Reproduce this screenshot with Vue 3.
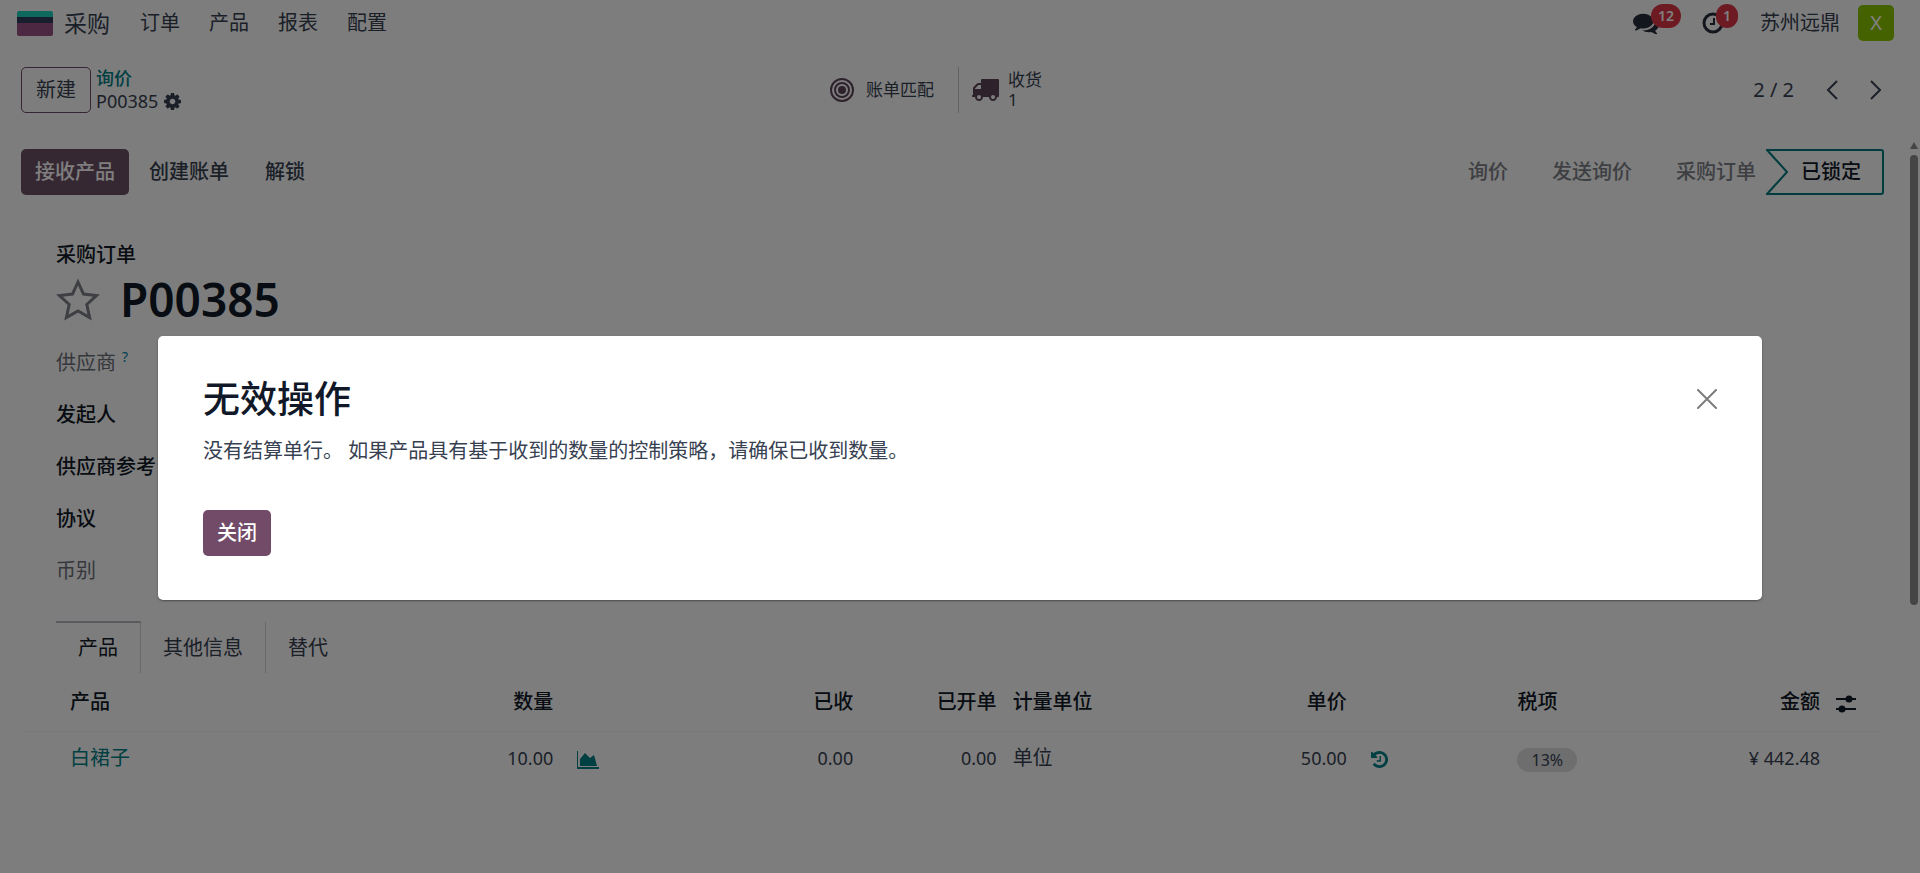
<template>
  <div class="app">
    <header class="navbar">
      <a href="#" class="brand">
        <svg class="brand__logo" viewBox="0 0 36 25" aria-hidden="true">
          <path d="M2 0h32a2 2 0 0 1 2 2v5H0V2a2 2 0 0 1 2-2z" fill="#1ad3bb" />
          <path d="M0 6h36v7H0z" fill="#2f3c5c" />
          <path d="M0 12h36v11a2 2 0 0 1-2 2H2a2 2 0 0 1-2-2z" fill="#985184" />
        </svg>
        <span class="brand__name">采购</span>
      </a>
      <nav class="menu">
        <a v-for="item in menu" :key="item" href="#" class="menu__item">{{ item }}</a>
      </nav>
      <div class="systray">
        <button type="button" class="systray__btn systray__btn--chat" aria-label="消息">
          <svg viewBox="0 0 1792 1792" width="26" height="26"><path fill="currentColor" :d="icons.comments" /></svg>
          <span class="badge">12</span>
        </button>
        <button type="button" class="systray__btn systray__btn--clock" aria-label="活动">
          <svg viewBox="0 0 22 22" width="22" height="22" fill="none" stroke="currentColor">
            <circle cx="11" cy="11" r="9" stroke-width="3" />
            <path d="M12 6v6H8" stroke-width="2" />
          </svg>
          <span class="badge">1</span>
        </button>
        <span class="systray__company">苏州远鼎</span>
        <button type="button" class="avatar">X</button>
      </div>
    </header>

    <section class="control-panel">
      <div class="control-panel__left">
        <button type="button" class="btn btn--outline">新建</button>
        <div class="breadcrumb">
          <a href="#" class="breadcrumb__link">询价</a>
          <div class="breadcrumb__current">
            <span>P00385</span>
            <button type="button" class="icon-btn" aria-label="设置">
              <svg viewBox="128 128 1536 1536" width="17" height="17"><path fill="currentColor" :d="icons.cog" /></svg>
            </button>
          </div>
        </div>
      </div>
      <div class="stats">
        <button type="button" class="stat stat--match">
          <svg viewBox="0 0 26 26" width="26" height="26" fill="none" stroke="currentColor" stroke-width="2">
            <circle cx="13" cy="13" r="11" />
            <circle cx="13" cy="13" r="7" />
            <circle cx="13" cy="13" r="4" fill="currentColor" stroke="none" />
          </svg>
          <span>账单匹配</span>
        </button>
        <button type="button" class="stat stat--receipt">
          <svg viewBox="0 256 1792 1408" width="28" height="22"><path fill="currentColor" :d="icons.truck" /></svg>
          <span class="stat__text">收货<br />1</span>
        </button>
      </div>
      <div class="pager">
        <span class="pager__value">2 / 2</span>
        <button type="button" class="icon-btn" aria-label="上一页">
          <svg viewBox="0 0 12 20" width="12" height="20" fill="none" stroke="currentColor" stroke-width="2"><path d="M11 1L2 10l9 9" /></svg>
        </button>
        <button type="button" class="icon-btn" aria-label="下一页">
          <svg viewBox="0 0 12 20" width="12" height="20" fill="none" stroke="currentColor" stroke-width="2"><path d="M1 1l9 9-9 9" /></svg>
        </button>
      </div>
    </section>

    <section class="statusbar">
      <div class="statusbar__actions">
        <button type="button" class="btn btn--primary btn--receive">接收产品</button>
        <button type="button" class="btn btn--link">创建账单</button>
        <button type="button" class="btn btn--link">解锁</button>
      </div>
      <div class="statusbar__steps">
        <button v-for="step in steps" :key="step" type="button" class="step">{{ step }}</button>
        <button type="button" class="step step--active">
          <svg class="step__shape" viewBox="0 0 118 46" preserveAspectRatio="none" aria-hidden="true">
            <path d="M1 1h114a2 2 0 0 1 2 2v40a2 2 0 0 1-2 2H1l20-22z" fill="none" stroke="#01787d" stroke-width="2" />
          </svg>
          <span class="step__label">已锁定</span>
        </button>
      </div>
    </section>

    <main class="sheet">
      <div class="sheet__kind">采购订单</div>
      <div class="sheet__title">
        <button type="button" class="icon-btn star" aria-label="收藏">
          <svg viewBox="0 0 44 43" width="44" height="43">
            <path d="M22 4l5.500 12 13 1.500-9.700 9 2.800 13L22 33l-11.600 6.500 2.800-13-9.700-9 13-1.500z" fill="none" stroke="currentColor" stroke-width="3" />
          </svg>
        </button>
        <h1>P00385</h1>
      </div>
      <div class="fields">
        <div v-for="field in fields" :key="field.label" class="field" :class="{ 'field--muted': field.muted }">
          {{ field.label }}<sup v-if="field.help" class="field__help">?</sup>
        </div>
      </div>
      <div class="tabs" role="tablist">
        <button
          v-for="(tab, index) in tabs"
          :key="tab"
          type="button"
          role="tab"
          class="tab"
          :class="{ 'tab--active': index === activeTab }"
          @click="activeTab = index"
        >{{ tab }}</button>
      </div>
    </main>

    <table class="lines">
      <colgroup>
        <col v-for="(width, index) in columns" :key="index" :style="{ width: width + '%' }" />
      </colgroup>
      <thead>
        <tr>
          <th class="lines__product">产品</th>
          <th class="num">数量</th>
          <th></th>
          <th class="num">已收</th>
          <th class="num">已开单</th>
          <th>计量单位</th>
          <th class="num">单价</th>
          <th></th>
          <th>税项</th>
          <th class="num">金额</th>
          <th class="lines__options">
            <button type="button" class="icon-btn" aria-label="可选列">
              <svg viewBox="0 0 20 18" width="20" height="18" fill="currentColor">
                <path d="M0 3h20v2H0zM0 13h20v2H0z" />
                <circle cx="13" cy="4" r="3.500" />
                <circle cx="6" cy="14" r="3.500" />
              </svg>
            </button>
          </th>
        </tr>
      </thead>
      <tbody>
        <tr v-for="line in lines" :key="line.product">
          <td class="lines__product"><a href="#" class="lines__link">{{ line.product }}</a></td>
          <td class="num value">{{ line.qty }}</td>
          <td class="lines__icon">
            <button type="button" class="icon-btn teal" aria-label="预测">
              <svg viewBox="0 0 22 18" width="22" height="18" fill="currentColor">
                <path d="M0 0h1v16h21v2H0z" />
                <path d="M3 15V8l5-6 5 5 4-3 3 11z" />
              </svg>
            </button>
          </td>
          <td class="num value">{{ line.received }}</td>
          <td class="num value">{{ line.billed }}</td>
          <td>{{ line.uom }}</td>
          <td class="num value">{{ line.price }}</td>
          <td class="lines__icon">
            <button type="button" class="icon-btn teal" aria-label="采购历史">
              <svg viewBox="128 128 1536 1536" width="17" height="17"><path fill="currentColor" :d="icons.history" /></svg>
            </button>
          </td>
          <td><span class="tag">{{ line.tax }}</span></td>
          <td class="num value">{{ line.amount }}</td>
          <td></td>
        </tr>
      </tbody>
    </table>

    <div class="scrollbar" aria-hidden="true">
      <span class="scrollbar__arrow"></span>
      <span class="scrollbar__thumb"></span>
    </div>

    <div v-if="showDialog" class="backdrop">
      <div class="dialog" role="dialog" aria-labelledby="dialog-title">
        <div class="dialog__header">
          <h2 id="dialog-title">无效操作</h2>
          <button type="button" class="icon-btn dialog__close" aria-label="关闭" @click="showDialog = false">
            <svg viewBox="0 0 20 20" width="20" height="20" fill="none" stroke="currentColor" stroke-width="2" stroke-linecap="round">
              <path d="M1 1l18 18M19 1L1 19" />
            </svg>
          </button>
        </div>
        <p class="dialog__text">没有结算单行。 如果产品具有基于收到的数量的控制策略，请确保已收到数量。</p>
        <button type="button" class="btn btn--primary" @click="showDialog = false">关闭</button>
      </div>
    </div>
  </div>
</template>

<script setup>
import { ref } from 'vue';

const showDialog = ref(true);
const activeTab = ref(0);

const menu = ['订单', '产品', '报表', '配置'];
const steps = ['询价', '发送询价', '采购订单'];
const tabs = ['产品', '其他信息', '替代'];

const fields = [
  { label: '供应商', muted: true, help: true },
  { label: '发起人' },
  { label: '供应商参考' },
  { label: '协议' },
  { label: '币别', muted: true },
];

// column widths, in percent of the table
const columns = [22.6, 6.4, 7.5, 8.6, 7.7, 10.5, 8.3, 8.3, 8.7, 8.4, 3];

const lines = [
  {
    product: '白裙子',
    qty: '10.00',
    received: '0.00',
    billed: '0.00',
    uom: '单位',
    price: '50.00',
    tax: '13%',
    amount: '¥ 442.48',
  },
];

const icons = {
  comments: 'M1408 768q0 139-94 257t-256.500 186.500-353.500 68.500q-86 0-176-16-124 88-278 128-36 9-86 16h-3q-11 0-20.500-8t-11.500-21q-1-3-1-6.500t.5-6.500 2-6l2.500-5 3.500-5.500 4-5 4.500-5 4-4.500q5-6 23-25t26-29.500 22.500-29 25-38.500 20.500-44q-124-72-195-177t-71-224q0-139 94-257t256.500-186.500 353.500-68.500 353.500 68.500 256.500 186.500 94 257zm384 256q0 120-71 224.500t-195 176.500q10 24 20.500 44t25 38.500 22.500 29 26 29.500 23 25q1 1 4 4.500t4.500 5 4 5 3.500 5.500l2.500 5 2 6 .5 6.500-1 6.500q-3 14-13 22t-22 7q-50-7-86-16-154-40-278-128-90 16-176 16-271 0-472-132 58 4 88 4 161 0 309-45t264-129q125-92 192-212t67-254q0-77-23-152 129 71 204 178t75 230z',
  cog: 'M1152 896q0-106-75-181t-181-75-181 75-75 181 75 181 181 75 181-75 75-181zm512-109v222q0 12-8 23t-20 13l-185 28q-19 54-39 91 35 50 107 138 10 12 10 25t-9 23q-27 37-99 108t-94 71q-12 0-26-9l-138-108q-44 23-91 38-16 136-29 186-7 28-36 28h-222q-14 0-24.500-8.500t-11.500-21.500l-28-184q-49-16-90-37l-141 107q-10 9-25 9-14 0-25-11-126-114-165-168-7-10-7-23 0-12 8-23 15-21 51-66.500t54-70.500q-27-50-41-99l-183-27q-13-2-21-12.500t-8-23.500v-222q0-12 8-23t19-13l186-28q14-46 39-92-40-57-107-138-10-12-10-24 0-10 9-23 26-36 98.500-107.500t94.500-71.500q13 0 26 10l138 107q44-23 91-38 16-136 29-186 7-28 36-28h222q14 0 24.500 8.500t11.500 21.500l28 184q49 16 90 37l142-107q9-9 24-9 13 0 25 10 129 119 165 170 7 8 7 22 0 12-8 23-15 21-51 66.500t-54 70.500q26 50 41 98l183 28q13 2 21 12.500t8 23.500z',
  truck: 'M640 1408q0-52-38-90t-90-38-90 38-38 90 38 90 90 38 90-38 38-90zm-384-512h384v-256h-158q-13 0-22 9l-195 195q-9 9-9 22v30zm1280 512q0-52-38-90t-90-38-90 38-38 90 38 90 90 38 90-38 38-90zm256-1088v1024q0 15-4 26.500t-13.500 18.500-16.500 11.500-23.500 6-22.500 2-25.500 0-22.500-.5q0 106-75 181t-181 75-181-75-75-181h-384q0 106-75 181t-181 75-181-75-75-181h-64q-3 0-22.500.5t-25.500 0-22.500-2-23.500-6-16.500-11.500-13.500-18.500-4-26.500q0-26 19-45t45-19v-320q0-8-.5-35t0-38 2.500-34.500 6.500-37 14-30.500 22.500-30l198-198q19-19 50.500-32t58.500-13h160v-192q0-26 19-45t45-19h1024q26 0 45 19t19 45z',
  history: 'M1664 896q0 156-61 298t-164 245-245 164-298 61q-172 0-327-72.500t-264-204.500q-7-10-6.500-22.500t8.500-20.500l137-138q10-9 25-9 16 2 23 12 73 95 179 147t225 52q104 0 198.500-40.500t163.500-109.500 109.500-163.500 40.500-198.500-40.500-198.500-109.500-163.500-163.500-109.500-198.500-40.500q-98 0-188 35.500t-160 101.500l137 138q31 30 14 69-17 40-59 40h-448q-26 0-45-19t-19-45v-448q0-42 40-59 39-17 69 14l130 129q107-101 244.500-156.500t284.500-55.500q156 0 298 61t245 164 164 245 61 298zm-640-288v448q0 14-9 23t-23 9h-320q-14 0-23-9t-9-23v-64q0-14 9-23t23-9h224v-352q0-14 9-23t23-9h64q14 0 23 9t9 23z',
};
</script>

<style>
body {
  margin: 0;
  background: #fafafa;
}
</style>

<style scoped>
.app {
  position: relative;
  min-height: 100vh;
  box-sizing: border-box;
  background: #fafafa;
  color: #374151;
  font-family: "Noto Sans", "Noto Sans CJK SC", sans-serif;
  font-size: 20px;
  line-height: 28px;
}

a {
  color: inherit;
  text-decoration: none;
}

button {
  margin: 0;
  padding: 0;
  border: 0;
  background: none;
  color: inherit;
  font: inherit;
  cursor: pointer;
}

svg {
  display: block;
  flex: none;
}

.icon-btn {
  display: inline-flex;
}

.teal {
  color: #017e84;
}

/* navbar */
.navbar {
  display: flex;
  align-items: center;
  height: 46px;
  padding: 0 26px 0 17px;
}

.brand {
  display: flex;
  align-items: center;
  gap: 11px;
  margin-right: 30px;
}

.brand__logo {
  width: 36px;
  height: 25px;
}

.brand__name {
  font-size: 23px;
}

.menu {
  display: flex;
  gap: 29px;
}

.systray {
  display: flex;
  align-items: center;
  margin-left: auto;
}

.systray__btn {
  position: relative;
  color: #262c3a;
}

.systray__btn--chat {
  margin-right: 43px;
}

.systray__btn--clock {
  margin-right: 36px;
}

.systray__company {
  margin-right: 18px;
}

.badge {
  position: absolute;
  left: 18px;
  bottom: 8px;
  min-width: 22px;
  padding: 0 7px;
  box-sizing: border-box;
  border-radius: 12px;
  background: #dc3545;
  color: #fff;
  font-size: 14px;
  font-weight: 600;
  line-height: 24px;
}

.systray__btn--clock .badge {
  left: 14px;
  bottom: 6px;
}

.avatar {
  width: 36px;
  height: 36px;
  border-radius: 5px;
  background: #8bc400;
  color: #fff;
}

/* control panel */
.control-panel {
  display: grid;
  grid-template-columns: 1fr auto 1fr;
  align-items: center;
  padding: 21px 38px 0 21px;
}

.control-panel__left {
  display: flex;
  align-items: center;
  gap: 5px;
}

.btn {
  height: 46px;
  padding: 0 14px;
  border-radius: 5px;
}

.btn--outline {
  border: 1px solid #714b67;
}

.btn--primary {
  background: #714b67;
  color: #fff;
  font-weight: 500;
}

.btn--receive {
  margin-right: 2px;
  background: #6c5065;
}

.btn--link {
  padding: 0 18px;
  font-weight: 500;
}

.breadcrumb {
  font-size: 18px;
  line-height: 23px;
}

.breadcrumb__link {
  color: #017e84;
  font-weight: 500;
}

.breadcrumb__current {
  display: flex;
  align-items: center;
  gap: 6px;
}

.stats {
  display: flex;
  height: 46px;
  padding-right: 44px;
  font-size: 17px;
  line-height: 20px;
}

.stat {
  display: flex;
  align-items: center;
  text-align: left;
}

.stat svg {
  color: #5b4356;
}

.stat--match {
  gap: 11px;
  padding: 0 24px;
  border-right: 1px solid #c4c4c8;
}

.stat--receipt {
  gap: 9px;
  padding: 0 12px;
}

.pager {
  display: flex;
  align-items: center;
  justify-content: flex-end;
  gap: 32px;
}

.pager__value {
  font-size: 20px;
}

/* statusbar */
.statusbar {
  display: flex;
  justify-content: space-between;
  padding: 36px 36px 0 21px;
}

.statusbar__actions,
.statusbar__steps {
  display: flex;
}

.step {
  height: 46px;
  padding: 0 22px;
  color: #7c7f87;
  font-weight: 500;
}

.step--active {
  position: relative;
  width: 118px;
  margin-left: -12px;
  padding: 0 0 0 12px;
  color: #111827;
}

.step__shape {
  position: absolute;
  inset: 0;
  width: 100%;
  height: 100%;
}

/* sheet */
.sheet {
  padding: 46px 56px 0;
  color: #111827;
  font-weight: 500;
}

.sheet__title {
  display: flex;
  align-items: center;
  gap: 20px;
  height: 60px;
}

.sheet__title h1 {
  margin: 0;
  font-size: 46px;
  font-weight: 600;
  line-height: 60px;
}

.star {
  color: #7c7f87;
}

.fields {
  margin-top: 8px;
}

.field {
  height: 52px;
  line-height: 52px;
}

.field--muted {
  color: #6b6f78;
  font-weight: 400;
}

.field__help {
  margin-left: 6px;
  color: #0180a5;
  font-size: 14px;
  line-height: 0;
}

.tabs {
  display: flex;
  margin-top: 24px;
}

.tab {
  height: 52px;
  padding: 0 22px;
  border-top: 2px solid transparent;
  border-right: 1px solid #d0d1d5;
  color: #374151;
  font-weight: 400;
}

.tab:last-child {
  border-right-color: transparent;
}

.tab--active {
  border-top-color: #b4b6bc;
  color: #111827;
}

/* order lines */
.lines {
  width: calc(100% - 57px);
  margin-left: 21px;
  border-collapse: collapse;
  table-layout: fixed;
}

.lines th,
.lines td {
  height: 52px;
  padding: 0 8px;
  text-align: left;
}

.lines th {
  height: 58px;
  color: #111827;
  font-weight: 500;
  border-bottom: 1px solid #f2f2f3;
}

.lines .num {
  text-align: right;
}

.lines .value {
  font-size: 18px;
}

.lines .lines__product {
  padding-left: 49px;
}

.lines__link {
  color: #017e84;
}

.lines .lines__icon {
  padding-left: 16px;
}

.lines .icon-btn {
  vertical-align: middle;
}

.tag {
  display: inline-block;
  padding: 0 14px;
  border-radius: 12px;
  background: #dcdcdf;
  font-size: 16px;
  line-height: 24px;
  vertical-align: middle;
}

/* scrollbar */
.scrollbar {
  position: absolute;
  top: 142px;
  right: 2px;
  width: 9px;
  display: flex;
  flex-direction: column;
  align-items: center;
  gap: 6px;
}

.scrollbar__arrow {
  border: 4px solid transparent;
  border-top: 0;
  border-bottom: 7px solid #8b8b8b;
}

.scrollbar__thumb {
  width: 8px;
  height: 450px;
  border-radius: 4px;
  background: #8b8b8b;
}

/* dialog */
.backdrop {
  position: absolute;
  inset: 0;
  padding: 336px 158px 0;
  background: rgba(0, 0, 0, 0.5);
}

.dialog {
  padding: 43px 45px 44px;
  border-radius: 5px;
  background: #fff;
  box-shadow: 0 1px 2px rgba(0, 0, 0, 0.4);
}

.dialog__header {
  display: flex;
  align-items: center;
  justify-content: space-between;
}

.dialog h2 {
  margin: 0;
  color: #111827;
  font-size: 37px;
  font-weight: 500;
  line-height: 40px;
}

.dialog__close {
  color: #7c7c7c;
}

.dialog__text {
  margin: 18px 0 45px;
}
</style>
